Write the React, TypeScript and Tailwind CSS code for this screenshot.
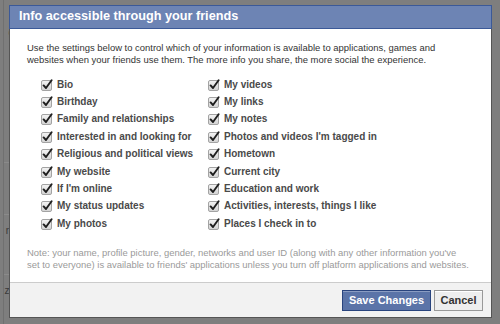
import React from "react";

const leftColumn = [
  "Bio",
  "Birthday",
  "Family and relationships",
  "Interested in and looking for",
  "Religious and political views",
  "My website",
  "If I'm online",
  "My status updates",
  "My photos",
];

const rightColumn = [
  "My videos",
  "My links",
  "My notes",
  "Photos and videos I'm tagged in",
  "Hometown",
  "Current city",
  "Education and work",
  "Activities, interests, things I like",
  "Places I check in to",
];

const CheckBox = () => (
  <svg width="12" height="12" viewBox="0 0 12 12" className="shrink-0">
    <defs>
      <linearGradient id="cbg" x1="0" y1="0" x2="0" y2="1">
        <stop offset="0" stopColor="#f4f4f4" />
        <stop offset="1" stopColor="#d2d2d2" />
      </linearGradient>
    </defs>
    <rect x="0.5" y="1.5" width="10" height="10" rx="1.5" fill="url(#cbg)" stroke="#a3a3a3" />
    <path d="M2.6 6.4 L5 9 L10.6 1.2" fill="none" stroke="#1e1e1e" strokeWidth="1.9" strokeLinecap="round" strokeLinejoin="round" />
  </svg>
);

const Option = ({ label }: { label: string }) => (
  <label className="flex items-center gap-[4px] h-[17.4px] text-[10px] font-bold text-[#4a4a4a] leading-none">
    <CheckBox />
    <span>{label}</span>
  </label>
);

export default function App() {
  return (
    <div className="relative w-[500px] h-[324px] overflow-hidden bg-[#7e7e7e] font-['Liberation_Sans',Arial,sans-serif]">
      {/* page behind the overlay */}
      <div className="w-[9px] h-full overflow-hidden border-l border-[#707070] ml-[3px] text-[10px] text-[#3a3a3a] flex flex-col items-end">
        <span className="mt-[25px] mr-[-2px]">g</span>
        <div className="mt-[122px] w-full border-t border-[#8a8a8a]" />
        <span className="mt-[8px] mr-[-3px]">ti</span>
        <div className="mt-[28px] w-full border-t border-[#8a8a8a]" />
        <span className="mt-[8px] mr-[-2px]">rc</span>
        <div className="mt-[36px] w-full border-t border-[#8a8a8a]" />
        <span className="mt-[8px] mr-[-3px]">za</span>
      </div>

      {/* dialog */}
      <div className="absolute left-[9px] top-[5px] w-[483px] h-[313px] flex flex-col bg-white border border-[#555555] border-t-0">
        <div className="h-[24px] -mx-px bg-[#6d84b4] border border-[#3b5998] flex items-center pl-[9px] text-white text-[12.7px] font-bold">
          Info accessible through your friends
        </div>

        <div className="flex-1 px-[17px]">
          <p className="mt-[13px] text-[9.45px] leading-[12px] text-[#333333]">
            Use the settings below to control which of your information is available to applications, games and
            <br />
            websites when your friends use them. The more info you share, the more social the experience.
          </p>

          <div className="mt-[10px] ml-[14px] flex">
            <div className="w-[167px] flex flex-col">
              {leftColumn.map((item) => (
                <Option key={item} label={item} />
              ))}
            </div>
            <div className="flex flex-col">
              {rightColumn.map((item) => (
                <Option key={item} label={item} />
              ))}
            </div>
          </div>

          <p className="mt-[14px] text-[9.45px] leading-[12px] text-[#9a9a9a] whitespace-nowrap">
            Note: your name, profile picture, gender, networks and user ID (along with any other information you've
            <br />
            set to everyone) is available to friends' applications unless you turn off platform applications and websites.
          </p>
        </div>

        <div className="h-[35px] bg-[#f2f2f2] border-t border-[#cccccc] flex items-start justify-end gap-[3px] pt-[7px] pr-[8px]">
          <button className="h-[21px] w-[89px] bg-[#5b74a8] border border-[#29447e] text-white text-[11px] font-bold shadow-[inset_0_1px_0_#8a9cc2]">
            Save Changes
          </button>
          <button className="h-[21px] w-[49px] bg-[#eeeeee] border border-[#999999] text-[#333333] text-[11px] font-bold shadow-[inset_0_1px_0_#ffffff]">
            Cancel
          </button>
        </div>
      </div>
    </div>
  );
}
